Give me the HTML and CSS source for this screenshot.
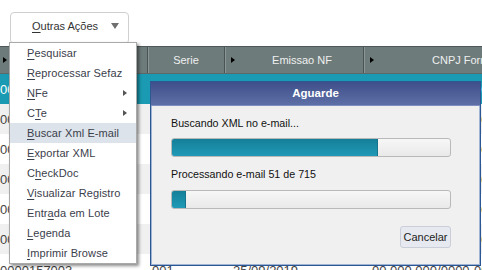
FILE: index.html
```html
<!DOCTYPE html>
<html lang="pt-BR">
<head>
<meta charset="utf-8">
<title>Outras Ações</title>
<link rel="stylesheet" href="styles.css">
</head>
<body>
<div class="page">
  <div class="toolbar">
    <div class="btn-acoes">
      <span class="btn-label"><u>O</u>utras Ações</span>
      <span class="caret"></span>
    </div>
  </div>

  <div class="grid">
    <div class="grid-head">
      <div class="hcell c1"><span class="tri"></span><span class="htext"></span></div>
      <div class="hcell c2"><span class="htext">Serie</span></div>
      <div class="hcell c3"><span class="tri"></span><span class="htext">Emissao NF</span></div>
      <div class="hcell c4"><span class="tri"></span><span class="htext">CNPJ Fornecedor</span></div>
    </div>
    <div class="row sel"><div class="cell c1">0000156997</div><div class="cell c2">001</div><div class="cell c3">25/09/2019</div><div class="cell c4">00.000.000/0000-00</div></div>
    <div class="row alt"><div class="cell c1">0000156998</div><div class="cell c2">001</div><div class="cell c3">25/09/2019</div><div class="cell c4">00.000.000/0000-00</div></div>
    <div class="row"><div class="cell c1">0000156999</div><div class="cell c2">001</div><div class="cell c3">25/09/2019</div><div class="cell c4">00.000.000/0000-00</div></div>
    <div class="row alt"><div class="cell c1">0000157000</div><div class="cell c2">001</div><div class="cell c3">25/09/2019</div><div class="cell c4">00.000.000/0000-00</div></div>
    <div class="row"><div class="cell c1">0000157001</div><div class="cell c2">001</div><div class="cell c3">25/09/2019</div><div class="cell c4">00.000.000/0000-00</div></div>
    <div class="row alt"><div class="cell c1">0000157002</div><div class="cell c2">001</div><div class="cell c3">25/09/2019</div><div class="cell c4">00.000.000/0000-00</div></div>
    <div class="row last"><div class="cell c1">0000157003</div><div class="cell c2">001</div><div class="cell c3">25/09/2019</div><div class="cell c4">00.000.000/0000-00</div></div>
  </div>

  <ul class="menu">
    <li class="item"><u>P</u>esquisar</li>
    <li class="item"><u>R</u>eprocessar Sefaz</li>
    <li class="item sub"><u>N</u>Fe<span class="arrow"></span></li>
    <li class="item sub">C<u>T</u>e<span class="arrow"></span></li>
    <li class="item hover"><u>B</u>uscar Xml E-mail</li>
    <li class="item"><u>E</u>xportar XML</li>
    <li class="item">C<u>h</u>eckDoc</li>
    <li class="item"><u>V</u>isualizar Registro</li>
    <li class="item">Entr<u>a</u>da em Lote</li>
    <li class="item"><u>L</u>egenda</li>
    <li class="item"><u>I</u>mprimir Browse</li>
  </ul>

  <div class="dialog">
    <div class="dlg-title">Aguarde</div>
    <div class="dlg-body">
      <div class="msg">Buscando XML no e-mail...</div>
      <div class="bar"><div class="fill" style="width:74%"></div></div>
      <div class="msg msg2">Processando e-mail 51 de 715</div>
      <div class="bar"><div class="fill small" style="width:5%"></div></div>
      <div class="actions"><div class="btn-cancel">Cancelar</div></div>
    </div>
  </div>
</div>
</body>
</html>
```

FILE: styles.css
```css
* { box-sizing: border-box; }
html, body { margin: 0; padding: 0; }
body {
  background: #ffffff;
  font-family: "Liberation Sans", Arial, sans-serif;
  width: 482px;
  height: 270px;
  overflow: hidden;
}
.page {
  position: relative;
  width: 482px;
  height: 270px;
  overflow: hidden;
}
u {
  text-decoration-thickness: 1px;
  text-underline-offset: 2px;
}

/* toolbar */
.toolbar {
  height: 46px;
  padding: 12px 0 0 10px;
}
.btn-acoes {
  width: 119px;
  height: 32px;
  border: 1px solid #cfcfcf;
  border-radius: 4px;
  background: #fff;
  display: flex;
  align-items: center;
  padding: 0 0 0 21px;
  font-size: 11px;
  color: #333;
}
.btn-label { flex: 1; margin-top: -4px; }
.caret {
  width: 0; height: 0;
  border-left: 4.5px solid transparent;
  border-right: 4.5px solid transparent;
  border-top: 6px solid #6f6f6f;
  margin: -4px 9px 0 0;
}

/* grid */
.grid { width: 482px; }
.grid-head {
  display: flex;
  height: 28px;
  background: #6e7b7b;
  border-top: 1px solid #4f5858;
  border-bottom: 1px solid #5d6868;
}
.hcell {
  display: flex;
  align-items: center;
  height: 100%;
  border-right: 1px solid #4a5353;
  box-shadow: inset 1px 0 0 #8a9696;
  color: #eef0f0;
  font-size: 11px;
}
.htext { flex: 1; text-align: center; white-space: nowrap; }
.tri {
  width: 0; height: 0;
  border-top: 3.5px solid transparent;
  border-bottom: 3.5px solid transparent;
  border-left: 4px solid #000;
  margin-left: 3px;
}
.hcell.c3 .tri, .hcell.c4 .tri { margin-left: 6px; }
.hcell.c3 .htext { padding-left: 6px; }
.hcell.c4 .htext { text-align: left; padding-left: 58px; }
.c1 { width: 148px; flex: none; }
.c2 { width: 77px; flex: none; }
.c3 { width: 139px; flex: none; }
.c4 { width: 160px; flex: none; }
.hcell.c1 { box-shadow: none; }

.row {
  display: flex;
  height: 30px;
  background: #ffffff;
  color: #444;
  font-size: 13px;
  align-items: center;
}
.row.alt { background: #f0f0f0; }
.row.sel { background: #1a9bb3; color: #ffffff; }
.row.last { padding-top: 2px; }
.cell { white-space: nowrap; overflow: hidden; padding-top: 1px; }
.cell.c1 { padding-left: 0; }
.cell.c2 { padding-left: 4px; }
.cell.c3 { padding-left: 8px; }
.cell.c4 { padding-left: 8px; }

/* popup menu */
.menu {
  position: absolute;
  left: 9px;
  top: 42px;
  width: 128px;
  margin: 0;
  padding: 0;
  list-style: none;
  background: #ffffff;
  border: 1px solid #a9a9a9;
  box-shadow: 2px 2px 3px rgba(0,0,0,0.45);
}
.item {
  position: relative;
  height: 20px;
  line-height: 20px;
  padding-left: 17px;
  font-size: 11px;
  letter-spacing: 0.1px;
  color: #3b404b;
  white-space: nowrap;
}
.item.hover { background: #dce3ea; }
.arrow {
  position: absolute;
  right: 9px;
  top: 7px;
  width: 0; height: 0;
  border-top: 3.5px solid transparent;
  border-bottom: 3.5px solid transparent;
  border-left: 4px solid #555;
}

/* dialog */
.dialog {
  position: absolute;
  left: 150px;
  top: 81px;
  width: 331px;
  height: 185px;
  border: 1px solid #2d5694;
  background: #f0f0f0;
  display: flex;
  flex-direction: column;
  box-shadow: inset 0 0 0 1px #9fb3d3;
}
.dlg-title {
  height: 24px;
  flex: none;
  background: linear-gradient(#3e4f89, #5e6fa8);
  color: #ffffff;
  font-weight: bold;
  font-size: 11.5px;
  line-height: 23px;
  text-align: center;
  border-bottom: 1px solid #7e8fbe;
}
.dlg-body {
  flex: 1;
  padding: 10px 29px 0 20px;
  display: flex;
  flex-direction: column;
}
.msg {
  font-size: 10.7px;
  line-height: 14px;
  color: #111;
  white-space: nowrap;
}
.msg2 { margin-top: 10px; }
.bar {
  margin-top: 8px;
  width: 280px;
  height: 19px;
  border: 1px solid #b9b9b9;
  border-radius: 3px;
  background: linear-gradient(#f7f7f7, #e9e9e9);
  overflow: hidden;
}
.msg2 + .bar { margin-top: 9px; }
.fill {
  height: 100%;
  background: linear-gradient(#157f99, #1f9ab7);
  border-right: 1px solid #16758c;
  min-width: 14px;
}
.actions {
  display: flex;
  justify-content: flex-end;
  margin-top: 17px;
}
.btn-cancel {
  width: 51px;
  height: 22px;
  border: 1px solid #c9ced8;
  border-radius: 3px;
  background: #e6e9f0;
  font-size: 11px;
  line-height: 20px;
  text-align: center;
  color: #222;
}
```
